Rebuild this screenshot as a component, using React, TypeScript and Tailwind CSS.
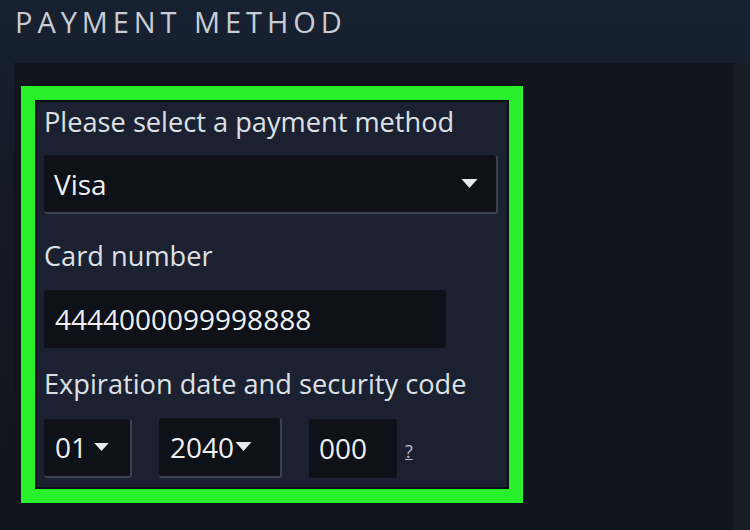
import React from "react";

const font = { fontFamily: "'Open Sans', 'Noto Sans', sans-serif" };

function Caret({ className = "" }: { className?: string }) {
  return (
    <svg viewBox="0 0 16 10" className={className} fill="#e8eaee">
      <path d="M0 0 H16 L8 9 Z" />
    </svg>
  );
}

export default function App() {
  return (
    <div
      className="w-[750px] h-[530px] overflow-hidden bg-gradient-to-b from-[#172131] via-[#121822] to-[#10141b] text-[#e4e7ec]"
      style={font}
    >
      {/* header */}
      <div className="h-[63px] pl-[15px] pt-[2px]">
        <h1 className="text-[29px] font-normal tracking-[0.17em] text-[#c9cdd3] leading-[40px]">
          PAYMENT METHOD
        </h1>
      </div>

      <div className="flex h-[467px]">
        <div className="ml-[14px] w-[719px] bg-[#10151d] pt-[23px] pl-[7px]">
          {/* highlighted form */}
          <div className="w-[502px] border-[14px] border-[#28f02a]">
            <div className="border-2 border-[#0b0e13] bg-[#1b2130] pl-[7px] pr-[8px] pt-[1px] pb-[9px]">
              <div className="text-[27.2px] leading-[38px] text-[#dde1e6]">Please select a payment method</div>
              <div className="mt-[14px] h-[59px] w-[454px] rounded-[3px] bg-[#0e1118] border-r-2 border-b-2 border-[#3a4150] flex items-center justify-between pl-[10px] pr-[18px]">
                <span className="text-[28px] text-[#eef0f3]">Visa</span>
                <Caret className="w-[17px] h-[10px]" />
              </div>

              <div className="mt-[23px] text-[27.2px] leading-[38px] text-[#dde1e6]">Card number</div>
              <div className="mt-[15px] h-[58px] w-[402px] rounded-[3px] bg-[#0e1118] flex items-center pl-[11px]">
                <span className="text-[28px] text-[#eef0f3]">4444000099998888</span>
              </div>

              <div className="mt-[17px] text-[27.2px] leading-[38px] text-[#dde1e6]">Expiration date and security code</div>
              <div className="mt-[15px] flex items-center">
                <div className="h-[59px] w-[88px] rounded-[3px] bg-[#0e1118] border-r-2 border-b-2 border-[#3a4150] flex items-center pl-[11px]">
                  <span className="text-[28px] text-[#eef0f3]">01</span>
                  <Caret className="ml-[7px] w-[15px] h-[9px]" />
                </div>
                <div className="ml-[27px] h-[60px] w-[123px] rounded-[3px] bg-[#0e1118] border-r-2 border-b-2 border-[#3a4150] flex items-center pl-[11px]">
                  <span className="text-[28px] text-[#eef0f3]">2040</span>
                  <Caret className="ml-[1px] w-[17px] h-[10px]" />
                </div>
                <div className="ml-[27px] h-[59px] w-[88px] rounded-[3px] bg-[#0e1118] flex items-center pl-[10px]">
                  <span className="text-[28px] text-[#eef0f3]">000</span>
                </div>
                <span className="ml-[8px] mt-[6px] text-[18px] underline text-[#b8bec8]">?</span>
              </div>
            </div>
          </div>
        </div>
        <div className="flex-1 bg-[#171c25]" />
      </div>
    </div>
  );
}
